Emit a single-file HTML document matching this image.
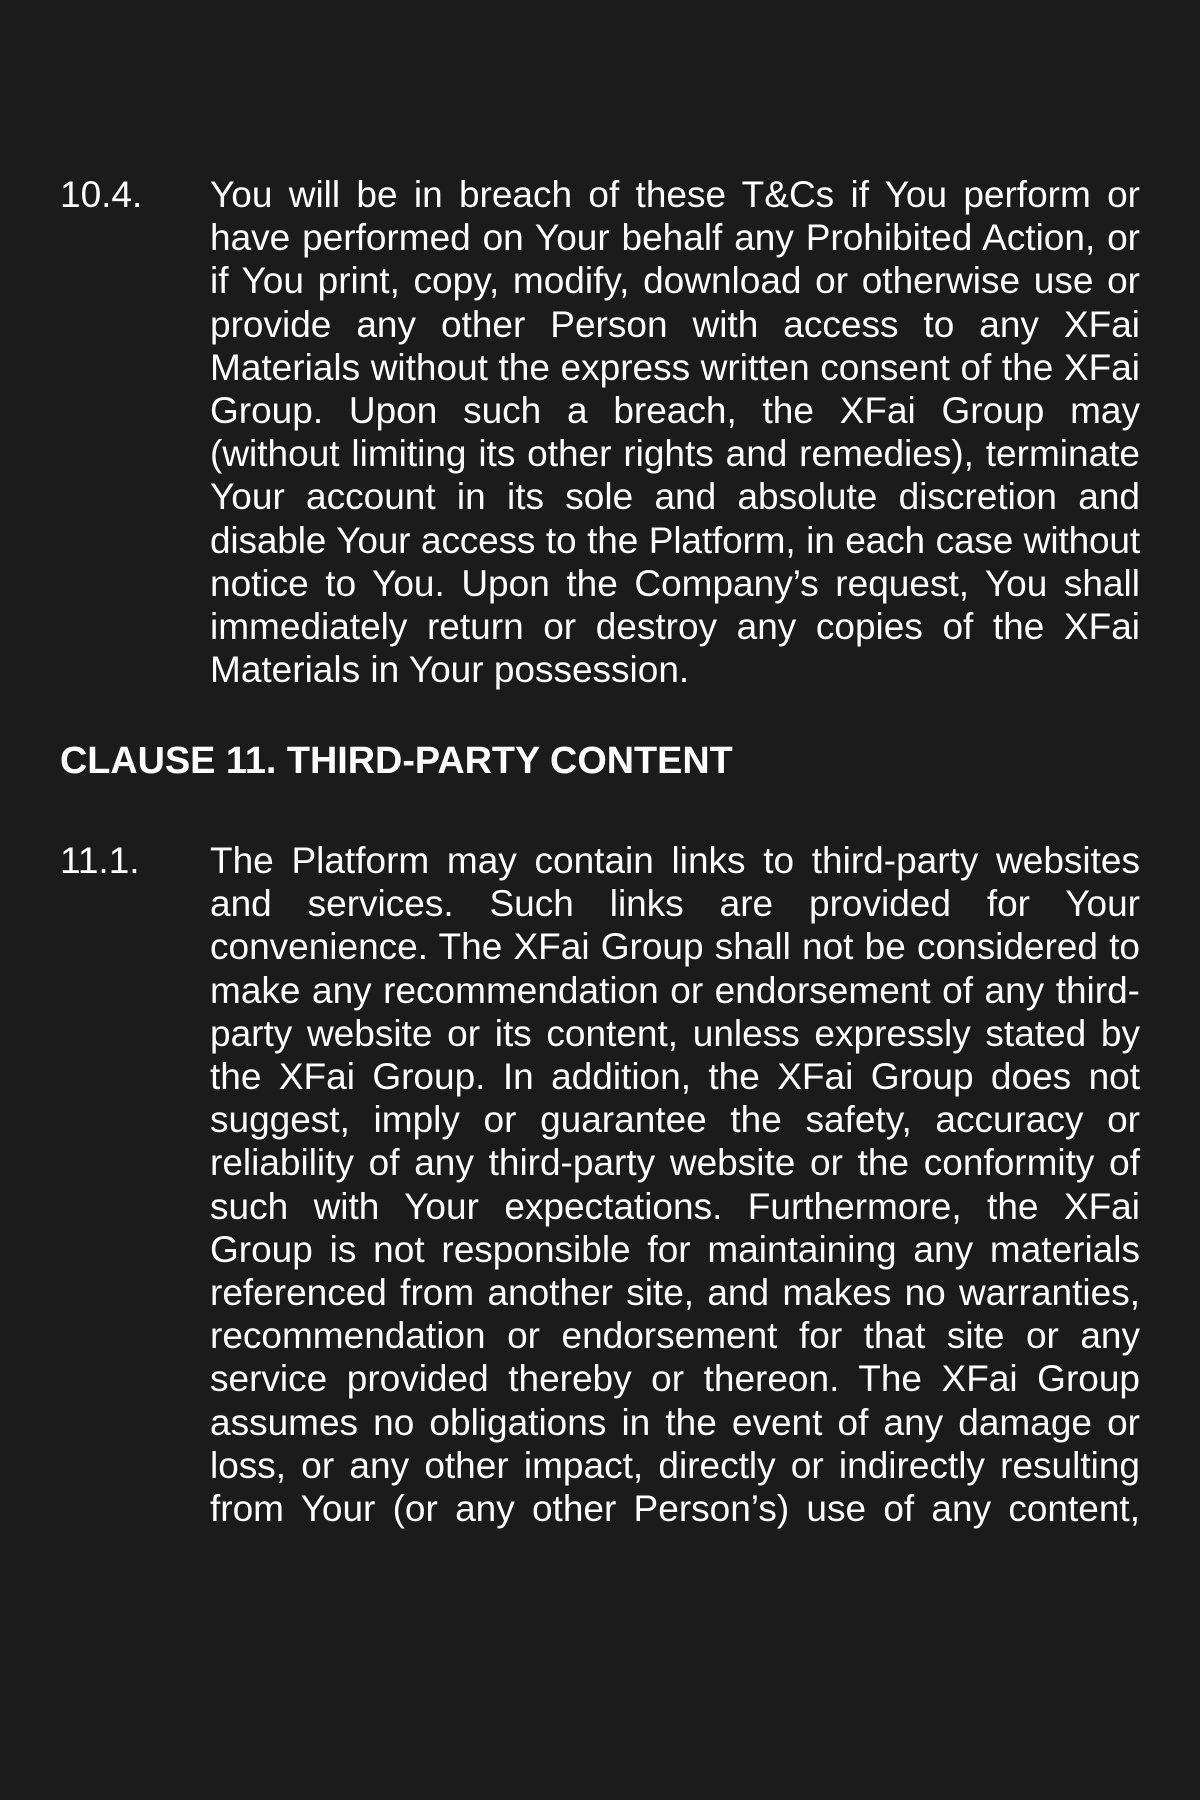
<!DOCTYPE html>
<html><head><meta charset="utf-8"><style>
body{margin:0;background:#1b1b1b;width:1200px;height:1800px;overflow:hidden;color:#fff;font-family:"Liberation Sans",Arial,sans-serif;font-size:37px;}
.num{position:absolute;left:60px;line-height:43.2px}
.blk{position:absolute;left:210px;width:930px;line-height:43.2px}
.blk div{text-align:justify;text-align-last:justify;white-space:nowrap;}
.blk div.l{text-align-last:left}
.blk div.t{letter-spacing:-0.15px}
.h{position:absolute;left:60px;top:740px;font-weight:bold;font-size:37.8px;line-height:43.2px}
</style></head><body>
<div class="num" style="top:173px">10.4.</div>
<div class="blk" style="top:173px">
<div>You will be in breach of these T&amp;Cs if You perform or</div>
<div>have performed on Your behalf any Prohibited Action, or</div>
<div>if You print, copy, modify, download or otherwise use or</div>
<div>provide any other Person with access to any XFai</div>
<div>Materials without the express written consent of the XFai</div>
<div>Group. Upon such a breach, the XFai Group may</div>
<div>(without limiting its other rights and remedies), terminate</div>
<div>Your account in its sole and absolute discretion and</div>
<div class="t">disable Your access to the Platform, in each case without</div>
<div>notice to You. Upon the Company’s request, You shall</div>
<div>immediately return or destroy any copies of the XFai</div>
<div class="l">Materials in Your possession.</div>
</div>
<div class="h">CLAUSE 11. THIRD-PARTY CONTENT</div>
<div class="num" style="top:839px">11.1.</div>
<div class="blk" style="top:839px">
<div>The Platform may contain links to third-party websites</div>
<div>and services. Such links are provided for Your</div>
<div>convenience. The XFai Group shall not be considered to</div>
<div>make any recommendation or endorsement of any third-</div>
<div>party website or its content, unless expressly stated by</div>
<div>the XFai Group. In addition, the XFai Group does not</div>
<div>suggest, imply or guarantee the safety, accuracy or</div>
<div>reliability of any third-party website or the conformity of</div>
<div>such with Your expectations. Furthermore, the XFai</div>
<div>Group is not responsible for maintaining any materials</div>
<div>referenced from another site, and makes no warranties,</div>
<div>recommendation or endorsement for that site or any</div>
<div>service provided thereby or thereon. The XFai Group</div>
<div>assumes no obligations in the event of any damage or</div>
<div>loss, or any other impact, directly or indirectly resulting</div>
<div>from Your (or any other Person’s) use of any content,</div>
</div>
</body></html>
